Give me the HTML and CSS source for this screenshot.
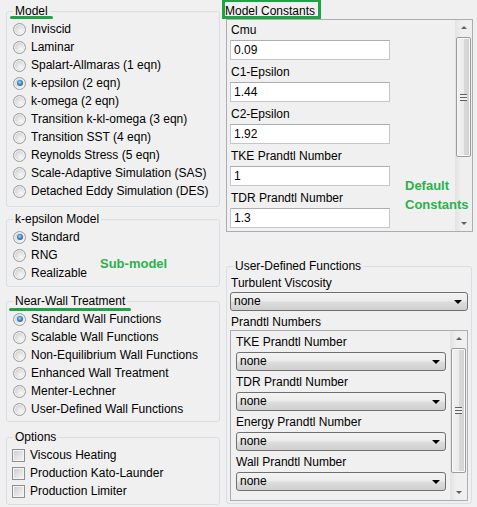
FILE: index.html
```html
<!DOCTYPE html>
<html>
<head>
<meta charset="utf-8">
<link rel="stylesheet" href="styles.css">
</head>
<body>
<div class="app">
  <div class="col-left">
    <fieldset class="grp g-model">
      <legend>Model</legend>
      <div class="opt"><span class="radio"></span>Inviscid</div>
      <div class="opt"><span class="radio"></span>Laminar</div>
      <div class="opt"><span class="radio"></span>Spalart-Allmaras (1 eqn)</div>
      <div class="opt"><span class="radio on"></span>k-epsilon (2 eqn)</div>
      <div class="opt"><span class="radio"></span>k-omega (2 eqn)</div>
      <div class="opt"><span class="radio"></span>Transition k-kl-omega (3 eqn)</div>
      <div class="opt"><span class="radio"></span>Transition SST (4 eqn)</div>
      <div class="opt"><span class="radio"></span>Reynolds Stress (5 eqn)</div>
      <div class="opt"><span class="radio"></span>Scale-Adaptive Simulation (SAS)</div>
      <div class="opt"><span class="radio"></span>Detached Eddy Simulation (DES)</div>
    </fieldset>
    <fieldset class="grp g-sub">
      <legend>k-epsilon Model</legend>
      <div class="opt"><span class="radio on"></span>Standard</div>
      <div class="opt"><span class="radio"></span>RNG</div>
      <div class="opt"><span class="radio"></span>Realizable</div>
      <div class="note note-sub">Sub-model</div>
    </fieldset>
    <fieldset class="grp g-wall">
      <legend>Near-Wall Treatment</legend>
      <div class="opt"><span class="radio on"></span>Standard Wall Functions</div>
      <div class="opt"><span class="radio"></span>Scalable Wall Functions</div>
      <div class="opt"><span class="radio"></span>Non-Equilibrium Wall Functions</div>
      <div class="opt"><span class="radio"></span>Enhanced Wall Treatment</div>
      <div class="opt"><span class="radio"></span>Menter-Lechner</div>
      <div class="opt"><span class="radio"></span>User-Defined Wall Functions</div>
    </fieldset>
    <fieldset class="grp g-opts">
      <legend>Options</legend>
      <div class="opt cb-opt"><span class="check"></span>Viscous Heating</div>
      <div class="opt cb-opt"><span class="check"></span>Production Kato-Launder</div>
      <div class="opt cb-opt"><span class="check"></span>Production Limiter</div>
    </fieldset>
  </div>

  <div class="col-right">
    <div class="mc-title">Model Constants<span class="green-box"></span></div>
    <div class="mc-panel">
      <div class="mc-list">
        <div class="field"><div class="flabel">Cmu</div><div class="input">0.09</div></div>
        <div class="field"><div class="flabel">C1-Epsilon</div><div class="input">1.44</div></div>
        <div class="field"><div class="flabel">C2-Epsilon</div><div class="input">1.92</div></div>
        <div class="field"><div class="flabel">TKE Prandtl Number</div><div class="input">1</div></div>
        <div class="field"><div class="flabel">TDR Prandtl Number</div><div class="input">1.3</div></div>
      </div>
      <div class="sb sb1">
        <div class="sb-btn up"><span class="tri-up"></span></div>
        <div class="sb-track"><div class="thumb"><span class="grip"></span></div></div>
        <div class="sb-btn down"><span class="tri-down"></span></div>
      </div>
      <div class="note note-dc">Default<br>Constants</div>
    </div>

    <fieldset class="grp udf">
      <legend>User-Defined Functions</legend>
      <div class="ulabel">Turbulent Viscosity</div>
      <div class="select wide"><span>none</span><span class="arrow"></span></div>
      <div class="ulabel pn-label">Prandtl Numbers</div>
      <div class="pn-panel">
        <div class="pn-list">
          <div class="plabel">TKE Prandtl Number</div>
          <div class="select narrow"><span>none</span><span class="arrow"></span></div>
          <div class="plabel">TDR Prandtl Number</div>
          <div class="select narrow"><span>none</span><span class="arrow"></span></div>
          <div class="plabel">Energy Prandtl Number</div>
          <div class="select narrow"><span>none</span><span class="arrow"></span></div>
          <div class="plabel">Wall Prandtl Number</div>
          <div class="select narrow"><span>none</span><span class="arrow"></span></div>
        </div>
        <div class="sb sb2">
          <div class="sb-btn up"><span class="tri-up"></span></div>
          <div class="sb-track"><div class="thumb"><span class="grip"></span></div></div>
          <div class="sb-btn down"><span class="tri-down"></span></div>
        </div>
      </div>
    </fieldset>
  </div>

  <div class="mark mark-model"></div>
  <div class="mark mark-wall"></div>
</div>
</body>
</html>
```

FILE: styles.css
```css
html, body {
  margin: 0;
  padding: 0;
  background: #f0f0f0;
}
body {
  font-family: "Liberation Sans", Arial, sans-serif;
  font-size: 12px;
  color: #000;
}
.app {
  position: relative;
  display: flex;
  width: 477px;
  height: 507px;
  overflow: hidden;
}
.col-left {
  width: 221px;
  flex: none;
}
.col-right {
  width: 256px;
  flex: none;
}

/* group boxes */
.grp {
  box-sizing: border-box;
  width: 214px;
  margin: 0 0 0 6px;
  padding: 1px 0 0 6px;
  border: 1px solid #d5dfe5;
  border-radius: 3px;
  min-width: 0;
  position: relative;
}
.grp legend {
  padding: 0 2px;
  margin: 0;
  line-height: 15px;
  font-size: 12px;
}
.g-model { margin-top: 4px; padding-bottom: 6px; }
.g-sub { margin-top: 5px; padding-bottom: 4px; }
.g-wall { margin-top: 7px; padding-bottom: 3px; }
.g-opts { margin-top: 8px; padding-bottom: 4px; }

.opt {
  display: flex;
  align-items: center;
  gap: 5px;
  height: 18px;
  white-space: nowrap;
}
.radio {
  box-sizing: border-box;
  width: 13px;
  height: 13px;
  border-radius: 50%;
  border: 1px solid #9a9c9e;
  background: radial-gradient(circle at 62% 65%, #f7f7f7 0%, #e6e6e6 35%, #d0d0d0 70%, #c8c8c8 100%);
  box-shadow: inset 0 0 0 1px #f4f4f4;
  flex: none;
  position: relative;
}
.radio.on::after {
  content: "";
  position: absolute;
  left: 2.5px;
  top: 2.5px;
  width: 6px;
  height: 6px;
  border-radius: 50%;
  background: radial-gradient(circle at 45% 40%, #a6dcf8 0%, #3d86c6 45%, #1a4680 100%);
}
.cb-opt { margin-left: -1px; }
.check {
  box-sizing: border-box;
  width: 13px;
  height: 13px;
  border: 1px solid #8e8f8f;
  background: linear-gradient(135deg, #cbcbcb 0%, #e4e4e4 55%, #f6f6f6 100%);
  box-shadow: inset 0 0 0 1px #f4f4f4;
  flex: none;
}

.note {
  position: absolute;
  color: #2bb24c;
  font-weight: bold;
  font-size: 13px;
  line-height: 19px;
  white-space: nowrap;
}
.note-sub { left: 93px; top: 27px; }
.note-dc { left: 178px; top: 156px; }

.mark {
  position: absolute;
  height: 3px;
  border-radius: 2px;
  background: #1fa347;
}
.mark-model { left: 10px; top: 16px; width: 43px; }
.mark-wall { left: 9px; top: 308px; width: 122px; }

/* model constants */
.mc-title {
  position: relative;
  margin-top: 4px;
  height: 15px;
  line-height: 15px;
  padding-left: 4px;
  white-space: nowrap;
}
.green-box {
  position: absolute;
  left: 1px;
  top: -4px;
  width: 99px;
  height: 19px;
  box-sizing: border-box;
  border: 3px solid #1fa347;
  border-top-width: 2px;
}
.mc-panel {
  position: relative;
  box-sizing: border-box;
  margin-left: 5px;
  width: 247px;
  height: 213px;
  border: 1px solid #abadb3;
  display: flex;
}
.mc-list {
  flex: 1;
  padding-left: 3px;
}
.field { margin-bottom: 2px; }
.flabel {
  height: 20px;
  line-height: 20px;
  padding-left: 1px;
}
.input {
  box-sizing: border-box;
  width: 160px;
  height: 20px;
  line-height: 18px;
  padding-left: 3px;
  background: #fff;
  border: 1px solid #c3c6cb;
  border-top-color: #abadb3;
}

/* scrollbars */
.sb {
  width: 17px;
  flex: none;
  display: flex;
  flex-direction: column;
  background: linear-gradient(90deg, #e3e3e3 0%, #efefef 40%, #efefef 100%);
}
.sb-btn {
  height: 17px;
  flex: none;
  display: flex;
  justify-content: center;
}
.sb-btn.up { align-items: flex-start; }
.sb-btn.down { align-items: flex-end; }
.tri-up {
  width: 0;
  height: 0;
  margin-top: 6px;
  border-left: 3px solid transparent;
  border-right: 3px solid transparent;
  border-bottom: 3px solid #606060;
}
.tri-down {
  width: 0;
  height: 0;
  margin-bottom: 6px;
  border-left: 3px solid transparent;
  border-right: 3px solid transparent;
  border-top: 3px solid #606060;
}
.sb-track {
  flex: 1;
  padding: 0 1px;
}
.thumb {
  box-sizing: border-box;
  border: 1px solid #9b9b9b;
  border-radius: 2px;
  background: linear-gradient(90deg, #f2f2f2 0%, #ebebeb 50%, #d9d9d9 51%, #d2d2d2 100%);
  box-shadow: inset 0 0 0 1px #f8f8f8;
  display: flex;
  align-items: center;
  justify-content: center;
}
.sb1 .thumb { height: 120px; }
.sb2 .thumb { height: 125px; }
.grip {
  width: 7px;
  height: 7px;
  background: repeating-linear-gradient(180deg, #5f5f5f 0px, #5f5f5f 1px, #f2f2f2 1px, #f2f2f2 3px);
}

/* user defined functions */
.udf {
  width: 246px;
  margin: 27px 0 0 5px;
  padding: 0 3px 2px 3px;
}
.udf legend { margin-left: 3px; }
.ulabel {
  line-height: 18px;
  padding-left: 1px;
}
.pn-label {
  margin-top: 3px;
  line-height: 16px;
}
.select {
  box-sizing: border-box;
  height: 19px;
  border: 1px solid #707070;
  border-radius: 3px;
  background: linear-gradient(180deg, #f3f3f3 0%, #ebebeb 48%, #dddddd 52%, #cfcfcf 100%);
  display: flex;
  align-items: center;
  justify-content: space-between;
  padding: 0 5px 0 3px;
  line-height: 17px;
}
.select.wide { width: 238px; }
.select.narrow { width: 210px; margin-bottom: 1px; padding-left: 3px; }
.arrow {
  width: 0;
  height: 0;
  border-left: 4px solid transparent;
  border-right: 4px solid transparent;
  border-top: 4px solid #000;
}
.pn-panel {
  box-sizing: border-box;
  width: 238px;
  height: 171px;
  border: 1px solid #abadb3;
  display: flex;
}
.pn-list {
  flex: 1;
  padding: 1px 0 0 5px;
}
.plabel {
  line-height: 20px;
}
```
